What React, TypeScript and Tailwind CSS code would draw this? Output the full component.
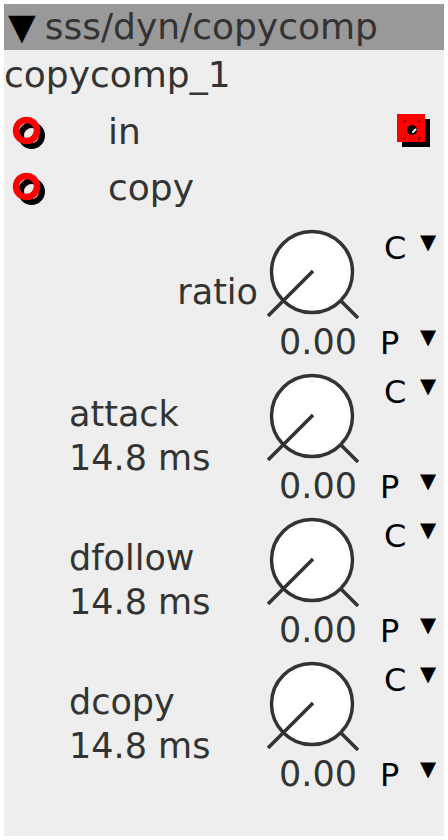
import React from 'react';

type Knob = {
  name: string;
  value?: string;
  align: 'right' | 'left';
};

const knobs: Knob[] = [
  { name: 'ratio', align: 'right' },
  { name: 'attack', value: '14.8 ms', align: 'left' },
  { name: 'dfollow', value: '14.8 ms', align: 'left' },
  { name: 'dcopy', value: '14.8 ms', align: 'left' },
];

const Ring: React.FC = () => (
  <svg width="40" height="40" viewBox="0 0 40 40" className="shrink-0">
    <circle cx="23.5" cy="21.5" r="10.5" fill="none" stroke="#000" strokeWidth="6" />
    <circle cx="18.5" cy="16.5" r="10.5" fill="none" stroke="#ff0000" strokeWidth="6.5" />
  </svg>
);

const OutPort: React.FC = () => (
  <svg width="40" height="40" viewBox="0 0 40 40" className="shrink-0">
    <rect x="6" y="6" width="28" height="28" fill="#000" />
    <rect x="1" y="1" width="28" height="28" fill="#ff0000" />
    <circle cx="16" cy="17" r="5" fill="#000" />
    <path d="M17 19 L19.5 16.5" stroke="#fff" strokeWidth="2" strokeLinecap="round" />
    <path d="M8 10 V8 H10 M22 8 H24 V10 M8 24 V26 H10 M22 26 H24 V24" fill="none" stroke="#400" strokeWidth="1" />
  </svg>
);

const Dial: React.FC = () => (
  <svg width="100" height="100" viewBox="0 0 100 100">
    <circle cx="50" cy="50" r="40.5" fill="#fff" stroke="#333" strokeWidth="3.5" />
    <line x1="51" y1="49" x2="6" y2="94" stroke="#333" strokeWidth="3.5" />
    <line x1="79" y1="79" x2="96" y2="96" stroke="#333" strokeWidth="3.5" />
  </svg>
);

const Picker: React.FC<{ letter: string; pad: string; width: string; top: string }> = ({ letter, pad, width, top }) => (
  <div className={`flex items-start ${pad} ${top}`}>
    <span className={`${width} text-[32px] leading-[32px] text-black`}>{letter}</span>
    <span className="text-[21px] leading-[21px] text-black">▼</span>
  </div>
);

const KnobRow: React.FC<{ knob: Knob }> = ({ knob }) => (
  <div className="flex h-[144px]">
    {/* label */}
    <div
      className={`w-[258px] flex items-center pt-[16px] ${
        knob.align === 'right' ? 'justify-end pr-[4px]' : 'justify-start pl-[65px]'
      }`}
    >
      <div className="leading-[44px] text-[#333]">
        <div>{knob.name}</div>
        {knob.value && <div>{knob.value}</div>}
      </div>
    </div>

    {/* dial + number */}
    <div className="w-[100px] flex flex-col">
      <div className="mt-[10px] h-[100px]">
        <Dial />
      </div>
      <div className="mt-[3px] h-[31px] leading-[34px] text-[35px] text-right pr-[5px] text-[#333]">0.00</div>
    </div>

    {/* C / P selectors */}
    <div className="flex-1 flex flex-col">
      <Picker letter="C" pad="pl-[22px]" width="w-[36px]" top="mt-[20px]" />
      <Picker letter="P" pad="pl-[18px]" width="w-[40px]" top="mt-[63px]" />
    </div>
  </div>
);

export default function App() {
  return (
    <div className="w-[448px] h-[840px] bg-white p-[4px] font-['DejaVu_Sans',sans-serif] text-[35px]">
      <div className="w-[440px] h-[832px] bg-[#eeeeee] flex flex-col">
        {/* title bar */}
        <div className="h-[46px] bg-[#999999] flex items-start pl-[4px] text-[36px] leading-[46px] text-[#333]">
          <span className="text-black">▼</span>
          <span className="ml-[9px]">sss/dyn/copycomp</span>
        </div>

        <div className="h-[50px] leading-[50px] text-[36px] text-[#333]">copycomp_1</div>

        {/* ports */}
        <div className="h-[56px] flex items-start text-[36px]">
          <div className="mt-[14px] ml-[4px]">
            <Ring />
          </div>
          <span className="ml-[60px] mt-[4px] leading-[56px] text-[#333]">in</span>
          <div className="ml-auto mt-[13px] mr-[8px]">
            <OutPort />
          </div>
        </div>
        <div className="h-[56px] flex items-start text-[36px]">
          <div className="mt-[14px] ml-[4px]">
            <Ring />
          </div>
          <span className="ml-[60px] mt-[4px] leading-[56px] text-[#333]">copy</span>
        </div>

        {knobs.map((k) => (
          <KnobRow key={k.name} knob={k} />
        ))}
      </div>
    </div>
  );
}
